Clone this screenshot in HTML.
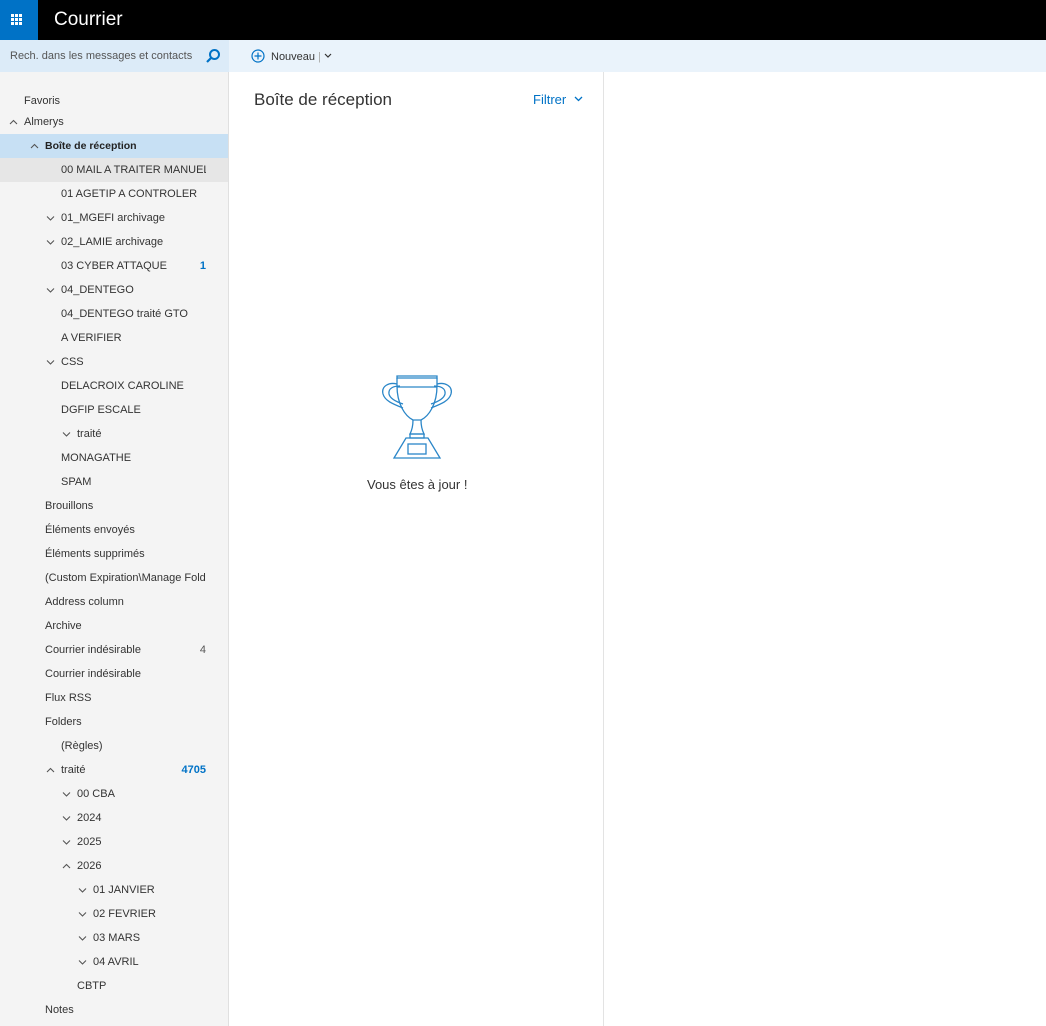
<!DOCTYPE html>
<html><head><meta charset="utf-8"><style>
*{margin:0;padding:0;box-sizing:border-box}
body{width:1046px;height:1026px;overflow:hidden;font-family:"Liberation Sans",sans-serif;background:#fff;position:relative;color:#333}
.top{position:absolute;left:0;top:0;width:1046px;height:40px;background:#000}
.waffle{position:absolute;left:0;top:0;width:38px;height:40px;background:#0072c6}
.title{position:absolute;left:54px;top:9px;color:#fff;font-size:19px}
.search{position:absolute;left:0;top:40px;width:229px;height:32px;background:#dcebf8}
.search span{position:absolute;left:10px;top:10px;font-size:11px;color:#555}
.tool{position:absolute;left:229px;top:40px;width:817px;height:32px;background:#eaf3fb}
.side{position:absolute;left:0;top:72px;width:229px;height:954px;background:#f4f4f4;border-right:1px solid #e0e0e0}
.mid{position:absolute;left:230px;top:72px;width:374px;height:954px;border-right:1px solid #e3e3e3}
.row{position:absolute;left:0;width:228px;height:24px;font-size:11px;line-height:24px;color:#333;white-space:nowrap;overflow:hidden}
.cnt{position:absolute;right:22px;color:#0072c6}
</style></head><body>
<div class="top"><div class="waffle"><svg width="38" height="40"><g fill="#fff">
<rect x="11" y="14" width="3" height="3"/><rect x="15" y="14" width="3" height="3"/><rect x="19" y="14" width="3" height="3"/>
<rect x="11" y="18" width="3" height="3"/><rect x="15" y="18" width="3" height="3"/><rect x="19" y="18" width="3" height="3"/>
<rect x="11" y="22" width="3" height="3"/><rect x="15" y="22" width="3" height="3"/><rect x="19" y="22" width="3" height="3"/></g></svg></div>
<div class="title">Courrier</div></div>
<div class="search"><span>Rech. dans les messages et contacts</span>
<svg style="position:absolute;left:205px;top:8px" width="16" height="16"><circle cx="9.5" cy="6.5" r="4.5" fill="none" stroke="#0072c6" stroke-width="2"/><line x1="6" y1="10" x2="2" y2="14" stroke="#0072c6" stroke-width="2.2"/></svg></div>
<div class="tool"><svg style="position:absolute;left:22px;top:9px" width="14" height="14"><circle cx="7" cy="7" r="6" fill="none" stroke="#0072c6" stroke-width="1.2"/><path d="M7 3.5v7M3.5 7h7" stroke="#0072c6" stroke-width="1.2"/></svg>
<span style="position:absolute;left:42px;top:11px;font-size:11px;color:#333">Nouveau <span style="color:#aaa">|</span></span>
<svg style="position:absolute;left:95px;top:13px" width="8" height="6"><path d="M1 1l3 3 3-3" fill="none" stroke="#333" stroke-width="1.2"/></svg></div>
<div class="side"></div>
<div id="rows"></div>
<div class="mid">
<div style="position:absolute;left:24px;top:18px;font-size:17px;color:#333">Boîte de réception</div>
<div style="position:absolute;left:303px;top:20px;font-size:13px;color:#0072c6">Filtrer</div>
<svg style="position:absolute;left:344px;top:24px" width="9" height="6"><path d="M1 1l3.5 3.5L8 1" fill="none" stroke="#0072c6" stroke-width="1.3"/></svg>
<svg style="position:absolute;left:150px;top:302px" width="75" height="88" fill="none" stroke="#2a86c8" stroke-width="1.3">
<path d="M17 2h40v2H17z"/><path d="M17 4v8c0 18 8 30 16 34h8c8-4 16-16 16-34V4"/><path d="M17 13h40"/>
<path d="M17 10c-8-2-16 2-14 10 2 7 10 10 20 14"/><path d="M57 10c8-2 16 2 14 10-2 7-10 10-20 14"/>
<path d="M20 12c-6 0-12 2-11 8 1 5 8 8 14 10"/><path d="M54 12c6 0 12 2 11 8-1 5-8 8-14 10"/>
<path d="M33 46c0 6-1 10-3 14h14c-2-4-3-8-3-14"/><path d="M30 60h14v4H30z"/>
<path d="M26 64h22l12 20H14z"/><rect x="28" y="70" width="18" height="10"/>
</svg>
<div style="position:absolute;left:137px;top:405px;font-size:13px;color:#333">Vous êtes à jour !</div>
</div>
<script>
var d=[["Favoris",0,""],["Almerys",0,"^"],["Boîte de réception",1,"^"],["00 MAIL A TRAITER MANUELL",2,""],["01 AGETIP A CONTROLER",2,""],["01_MGEFI archivage",2,"v"],["02_LAMIE archivage",2,"v"],["03 CYBER ATTAQUE",2,"",1],["04_DENTEGO",2,"v"],["04_DENTEGO traité GTO",2,""],["A VERIFIER",2,""],["CSS",2,"v"],["DELACROIX CAROLINE",2,""],["DGFIP ESCALE",2,""],["traité",3,"v"],["MONAGATHE",2,""],["SPAM",2,""],["Brouillons",1,""],["Éléments envoyés",1,""],["Éléments supprimés",1,""],["(Custom Expiration\\Manage Folders",1,""],["Address column",1,""],["Archive",1,""],["Courrier indésirable",1,"","4g"],["Courrier indésirable",1,""],["Flux RSS",1,""],["Folders",1,""],["(Règles)",2,""],["traité",2,"^",4705],["00 CBA",3,"v"],["2024",3,"v"],["2025",3,"v"],["2026",3,"^"],["01 JANVIER",4,"v"],["02 FEVRIER",4,"v"],["03 MARS",4,"v"],["04 AVRIL",4,"v"],["CBTP",3,""],["Notes",1,""]];
var h="";d.forEach(function(r,i){var y=i==0?89:110+(i-1)*24;var tx=[24,45,61,77,93][r[1]];
var bg=i==2?"background:#c7e0f4;":i==3?"background:#e6e6e6;":"";
var c="";if(r[2]){var p=r[2]=="^"?"M1 5l3.5-3.5L8 5":"M1 1.5l3.5 3.5L8 1.5";c='<svg style="position:absolute;left:'+(tx-15)+'px;top:9px" width="9" height="7"><path d="'+p+'" fill="none" stroke="#555" stroke-width="1.1"/></svg>';}
var n="";if(r[3]){var g=String(r[3]).indexOf("g")>0;n='<span class="cnt" style="'+(g?"color:#555":"font-weight:bold")+'">'+String(r[3]).replace("g","")+'</span>';}
h+='<div class="row" style="top:'+y+'px;'+bg+'">'+c+'<span style="position:absolute;left:'+tx+'px;width:'+(206-tx)+'px;overflow:hidden;'+(i==2?"color:#222;font-weight:bold;font-size:10.5px":"")+'">'+r[0]+'</span>'+n+'</div>';});
document.getElementById("rows").innerHTML=h;
</script>
</body></html>
